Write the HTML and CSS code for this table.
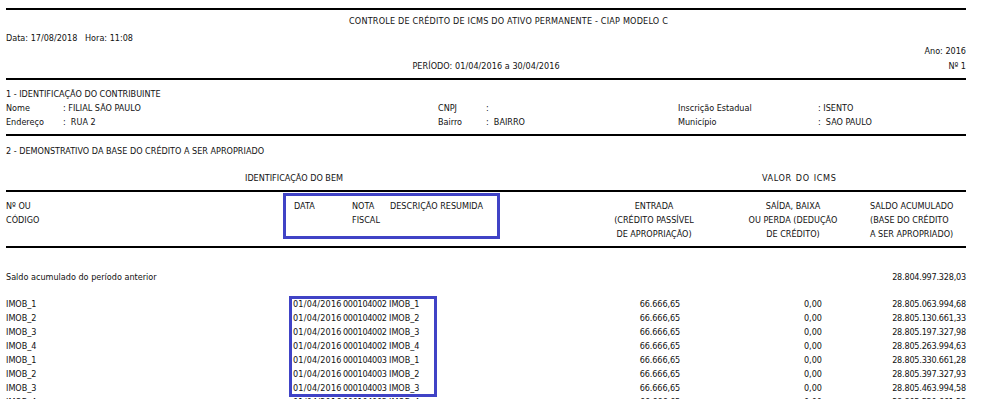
FILE: index.html
```html
<!DOCTYPE html>
<html lang="pt-BR">
<head>
<meta charset="utf-8">
<title>CIAP Modelo C</title>
<link rel="stylesheet" href="styles.css">
</head>
<body>
<div class="page">
  <div class="rule"></div>
  <div class="hdr-title">CONTROLE DE CRÉDITO DE ICMS DO ATIVO PERMANENTE - CIAP MODELO C</div>
  <div class="hdr-date">Data: 17/08/2018&nbsp;&nbsp; Hora: 11:08</div>
  <div class="hdr-ano">Ano: 2016</div>
  <div class="hdr-periodo">
    <span></span>
    <span class="periodo">PERÍODO: 01/04/2016 a 30/04/2016</span>
    <span class="numero">Nº 1</span>
  </div>
  <div class="rule rule-b"></div>

  <div class="sec-title s1">1 - IDENTIFICAÇÃO DO CONTRIBUINTE</div>
  <div class="contrib">
    <span>Nome</span><span>: FILIAL SÃO PAULO</span><span>CNPJ</span><span>:</span><span>Inscrição Estadual</span><span>: ISENTO</span>
    <span>Endereço</span><span>:&nbsp; RUA 2</span><span>Bairro</span><span>:&nbsp; BAIRRO</span><span>Município</span><span>:&nbsp; SAO PAULO</span>
  </div>
  <div class="rule rule-c"></div>

  <div class="sec-title s2">2 - DEMONSTRATIVO DA BASE DO CRÉDITO A SER APROPRIADO</div>
  <div class="groups">
    <span class="g-bem">IDENTIFICAÇÃO DO BEM</span>
    <span class="g-icms">VALOR DO ICMS</span>
  </div>
  <div class="rule rule-d"></div>
  <div class="thead">
    <div class="cols">
      <div>Nº OU<br>CÓDIGO</div>
      <div class="h-data">DATA</div>
      <div class="h-nota">NOTA<br>FISCAL</div>
      <div class="h-desc">DESCRIÇÃO RESUMIDA</div>
      <div class="h-ent">ENTRADA<br>(CRÉDITO PASSÍVEL<br>DE APROPRIAÇÃO)</div>
      <div class="h-sai">SAÍDA, BAIXA<br>OU PERDA (DEDUÇÃO<br>DE CRÉDITO)</div>
      <div class="h-sal">SALDO ACUMULADO<br>(BASE DO CRÉDITO<br>A SER APROPRIADO)</div>
    </div>
    <div class="mark mark-head"></div>
  </div>
  <div class="rule rule-e"></div>

  <div class="saldo">
    <span>Saldo acumulado do período anterior</span>
    <span class="num">28.804.997.328,03</span>
  </div>

  <div class="tbody">
    <div class="cols row"><div>IMOB_1</div><div class="d">01/04/2016</div><div class="nf">000104002</div><div>IMOB_1</div><div class="n-ent">66.666,65</div><div class="n-sai">0,00</div><div class="n-sal">28.805.063.994,68</div></div>
    <div class="cols row"><div>IMOB_2</div><div class="d">01/04/2016</div><div class="nf">000104002</div><div>IMOB_2</div><div class="n-ent">66.666,65</div><div class="n-sai">0,00</div><div class="n-sal">28.805.130.661,33</div></div>
    <div class="cols row"><div>IMOB_3</div><div class="d">01/04/2016</div><div class="nf">000104002</div><div>IMOB_3</div><div class="n-ent">66.666,65</div><div class="n-sai">0,00</div><div class="n-sal">28.805.197.327,98</div></div>
    <div class="cols row"><div>IMOB_4</div><div class="d">01/04/2016</div><div class="nf">000104002</div><div>IMOB_4</div><div class="n-ent">66.666,65</div><div class="n-sai">0,00</div><div class="n-sal">28.805.263.994,63</div></div>
    <div class="cols row"><div>IMOB_1</div><div class="d">01/04/2016</div><div class="nf">000104003</div><div>IMOB_1</div><div class="n-ent">66.666,65</div><div class="n-sai">0,00</div><div class="n-sal">28.805.330.661,28</div></div>
    <div class="cols row"><div>IMOB_2</div><div class="d">01/04/2016</div><div class="nf">000104003</div><div>IMOB_2</div><div class="n-ent">66.666,65</div><div class="n-sai">0,00</div><div class="n-sal">28.805.397.327,93</div></div>
    <div class="cols row"><div>IMOB_3</div><div class="d">01/04/2016</div><div class="nf">000104003</div><div>IMOB_3</div><div class="n-ent">66.666,65</div><div class="n-sai">0,00</div><div class="n-sal">28.805.463.994,58</div></div>
    <div class="cols row"><div>IMOB_4</div><div class="d">01/04/2016</div><div class="nf">000104003</div><div>IMOB_4</div><div class="n-ent">66.666,65</div><div class="n-sai">0,00</div><div class="n-sal">28.805.530.661,23</div></div>
    <div class="mark mark-body"></div>
  </div>
</div>
</body>
</html>
```
FILE: styles.css
```css
html, body {
  margin: 0;
  padding: 0;
  background: #fff;
  overflow: hidden;
}
body {
  font-family: "DejaVu Sans Condensed", "DejaVu Sans", sans-serif;
  font-stretch: condensed;
  font-size: 9px;
  color: #111;
}
.page {
  width: 960px;
  margin-left: 6px;
  padding-top: 8px;
}
.rule {
  height: 2px;
  background: #000;
}
.hdr-title {
  height: 20px;
  padding-top: 1px;
  line-height: 20px;
  padding-left: 343px;
  letter-spacing: 0.2px;
}
.hdr-date {
  height: 13px;
  padding-top: 1px;
  line-height: 13px;
}
.hdr-ano {
  height: 12px;
  line-height: 12px;
  text-align: right;
}
.hdr-periodo {
  height: 19px;
  line-height: 19px;
  display: grid;
  grid-template-columns: 1fr auto 1fr;
}
.periodo { letter-spacing: 0.05px; }
.numero { text-align: right; }
.rule-b { margin-top: 2px; }
.sec-title {
  height: 13px;
  line-height: 13px;
}
.s1 { margin-top: 8px; }
.contrib {
  display: grid;
  grid-template-columns: 57px 375px 48px 192px 140px 148px;
  grid-auto-rows: 14px;
  line-height: 14px;
  white-space: pre;
}
.rule-c { margin-top: 5px; }
.s2 { margin-top: 8px; height: 14px; line-height: 14px; }
.groups {
  margin-top: 13px;
  height: 14px;
  line-height: 14px;
  display: flex;
}
.g-bem { margin-left: 239px; }
.g-icms { margin-left: 419px; letter-spacing: 0.6px; word-spacing: 1px; }
.rule-d { margin-top: 5px; }
.thead {
  position: relative;
  padding-top: 7px;
  height: 41px;
}
.cols {
  display: grid;
  grid-template-columns: 287px 50px 46px 215px 100px 166px 96px;
  line-height: 14px;
}
.h-data { padding-left: 1px; }
.h-nota { padding-left: 9px; }
.h-desc { padding-left: 1px; white-space: nowrap; }
.h-ent { text-align: center; white-space: nowrap; }
.h-sai { text-align: center; padding-left: 12px; white-space: nowrap; }
.h-sal { white-space: nowrap; }
.rule-e { margin-top: 6px; }
.saldo {
  margin-top: 22px;
  height: 14px;
  line-height: 14px;
  display: flex;
  justify-content: space-between;
}
.num { letter-spacing: -0.2px; }
.tbody {
  position: relative;
  margin-top: 13px;
}
.row { height: 14px; white-space: nowrap; }
.d { letter-spacing: 0.2px; }
.nf { letter-spacing: -0.3px; }
.n-ent { text-align: right; padding-right: 24px; letter-spacing: -0.1px; }
.n-sai { text-align: right; padding-right: 48px; }
.n-sal { text-align: right; letter-spacing: -0.2px; }
.mark {
  position: absolute;
  border: 3px solid #4043c6;
  box-sizing: border-box;
}
.mark-head {
  left: 277px;
  top: 1px;
  width: 217px;
  height: 46px;
}
.mark-body {
  left: 283px;
  top: -1px;
  width: 148px;
  height: 101px;
}
```
